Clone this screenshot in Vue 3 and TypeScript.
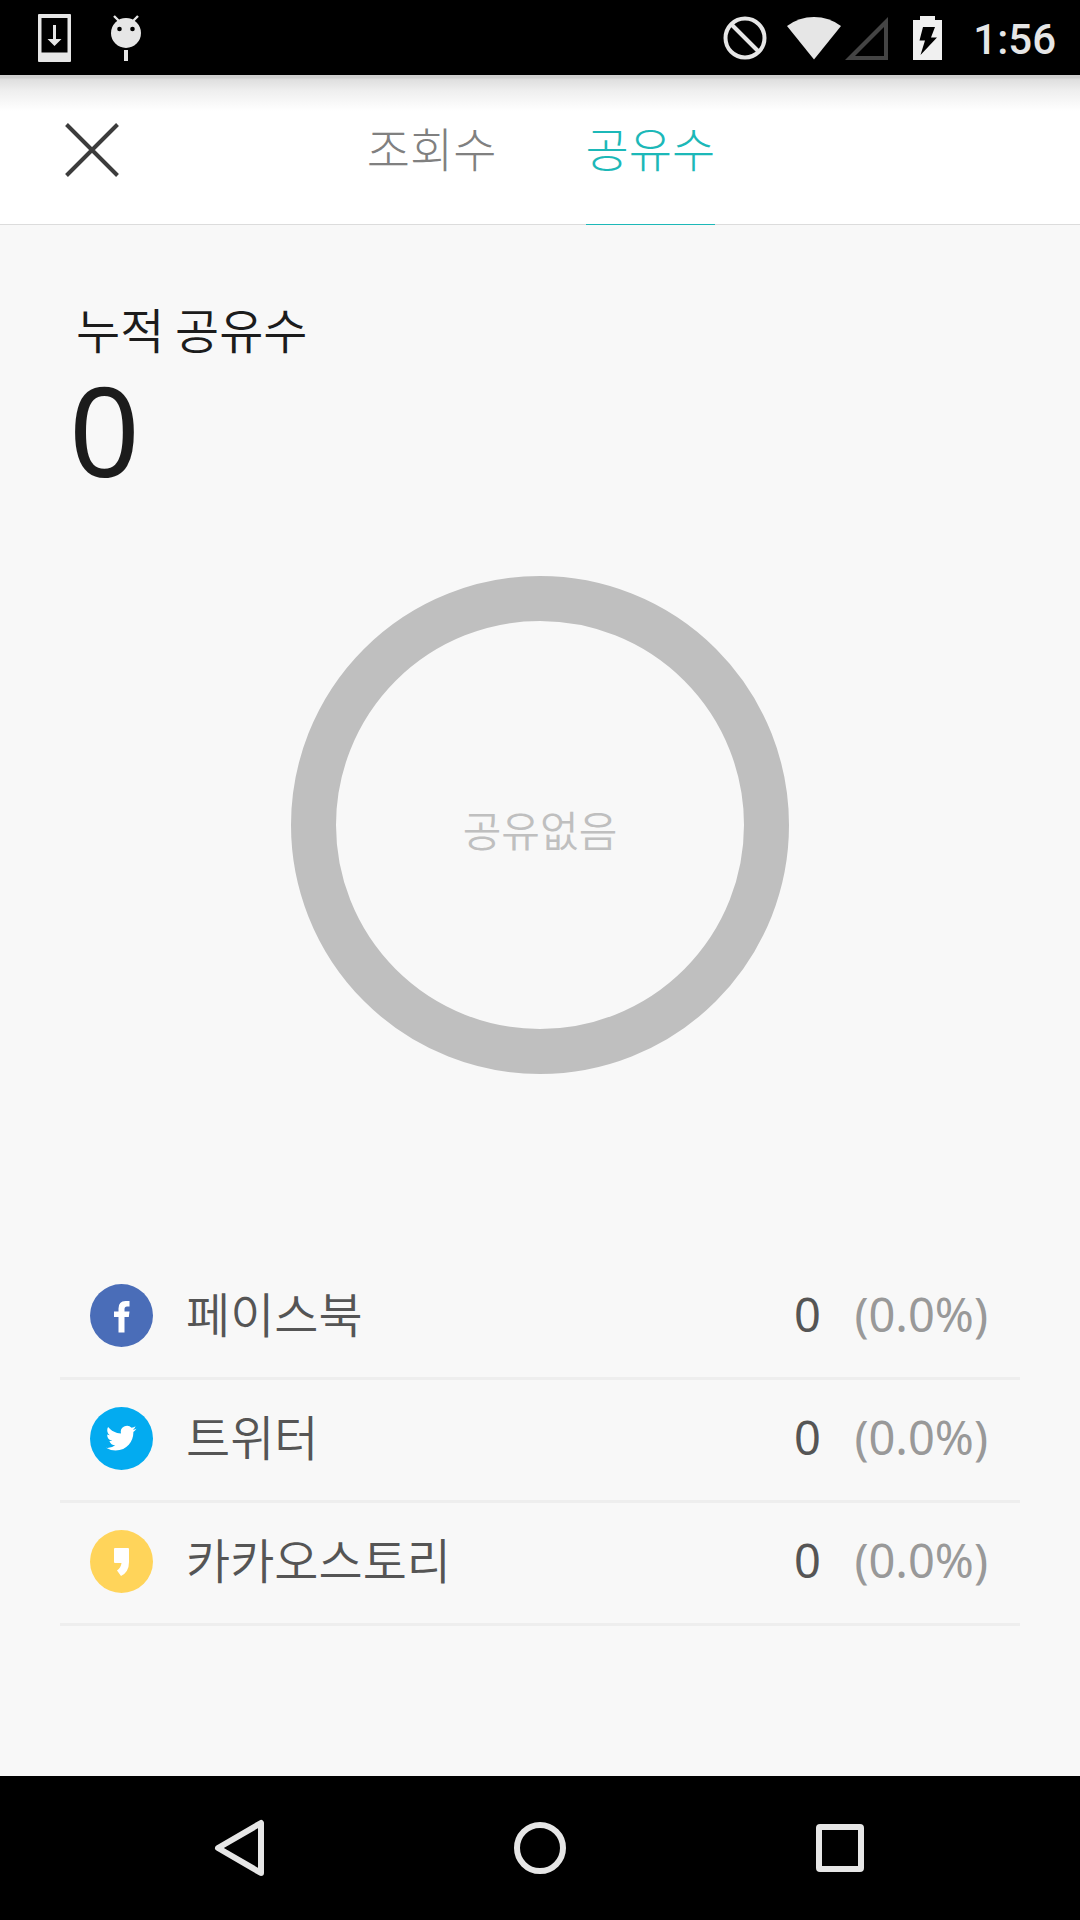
<script setup lang="ts">
import { ref } from 'vue'

interface Channel {
  id: 'facebook' | 'twitter' | 'story'
  name: string
  count: number
}

const tabs = ['조회수', '공유수']
const activeTab = ref('공유수')

const channels: Channel[] = [
  { id: 'facebook', name: '페이스북', count: 0 },
  { id: 'twitter', name: '트위터', count: 0 },
  { id: 'story', name: '카카오스토리', count: 0 },
]

const total = channels.reduce((sum, c) => sum + c.count, 0)

function share(count: number): string {
  return total === 0 ? '0.0' : ((count / total) * 100).toFixed(1)
}
</script>

<template>
  <div class="screen">
    <div class="status-bar">
      <div class="notifications">
        <svg class="icon-download" viewBox="0 0 33 48" width="33" height="48" aria-hidden="true">
          <path fill="#e6e6e6" fill-rule="evenodd" d="M1 0H32Q33 0 33 1V47Q33 48 32 48H1Q0 48 0 47V1Q0 0 1 0ZM3.500 4V38.500H29.500V4Z" />
          <path fill="#e6e6e6" d="M15 11H18V25H23.500L16.500 32L9.500 25H15Z" />
        </svg>
        <svg class="icon-bug" viewBox="0 0 30 46" width="30" height="46" aria-hidden="true">
          <path d="M3 1L8 6M27 1L22 6" stroke="#e6e6e6" stroke-width="2.400" />
          <circle cx="15" cy="18" r="15" fill="#e6e6e6" />
          <circle cx="8.500" cy="14" r="2.300" fill="#000" />
          <circle cx="21.500" cy="14" r="2.300" fill="#000" />
          <path d="M13 35H17V46H13Z" fill="#e6e6e6" />
        </svg>
      </div>
      <div class="system">
        <svg class="icon-block" viewBox="0 0 44 44" width="44" height="44" aria-hidden="true">
          <g fill="none" stroke="#e6e6e6" stroke-width="4">
            <circle cx="22" cy="22" r="19.500" />
            <path d="M8.500 8.500L35.500 35.500" />
          </g>
        </svg>
        <svg class="icon-wifi" viewBox="0 0 54 44" width="54" height="44" aria-hidden="true">
          <path fill="#e6e6e6" d="M0 10Q12 1 27 1T54 10L27 43.500Z" />
        </svg>
        <svg class="icon-signal" viewBox="0 0 43 44" width="43" height="44" aria-hidden="true">
          <path fill="#444" fill-rule="evenodd" d="M43 1V44H0ZM39 11L10 40H39Z" />
        </svg>
        <svg class="icon-battery" viewBox="0 0 29 44" width="29" height="44" aria-hidden="true">
          <path fill="#f0f0f0" d="M7 0H22V4H29V44H0V4H7Z" />
          <path fill="#000" d="M10 11H22L18 21.500H24L7.500 39L12 24.500H6.500Z" />
        </svg>
        <time class="clock">1:56</time>
      </div>
    </div>

    <header class="header">
      <button class="close" type="button" aria-label="닫기">
        <svg viewBox="0 0 54 54" width="54" height="54" aria-hidden="true">
          <path d="M1.500 1.500L52.500 52.500M52.500 1.500L1.500 52.500" stroke="#3c3c3c" stroke-width="4" />
        </svg>
      </button>
      <nav class="tabs" role="tablist">
        <button
          v-for="tab in tabs"
          :key="tab"
          type="button"
          role="tab"
          class="tab"
          :class="{ active: tab === activeTab }"
          :aria-selected="tab === activeTab"
          @click="activeTab = tab"
        >{{ tab }}</button>
      </nav>
    </header>

    <main class="content">
      <h1 class="title">누적 공유수</h1>
      <p class="total">{{ total }}</p>

      <div class="ring">공유없음</div>

      <table class="channels">
        <tbody>
          <tr v-for="channel in channels" :key="channel.id">
            <th scope="row">
              <div class="channel">
                <svg viewBox="0 0 63 63" width="63" height="63" aria-hidden="true">
                  <template v-if="channel.id === 'facebook'">
                    <circle cx="31.500" cy="31.500" r="31.500" fill="#4a6db8" />
                    <path fill="#fff" d="M28.500 48.500V33H24V27.500H28.500V24.500Q28.500 17 35.500 17H39.500V22.500H37Q34.500 22.500 34.500 25V27.500H39.500L38.800 33H34.500V48.500Z" />
                  </template>
                  <template v-else-if="channel.id === 'twitter'">
                    <circle cx="31.500" cy="31.500" r="31.500" fill="#03abf0" />
                    <path fill="#fff" transform="translate(16 16) scale(1.270)" d="M23.950 4.570a10 10 0 0 1-2.820.78 4.960 4.960 0 0 0 2.160-2.720c-.95.560-2 .96-3.130 1.180a4.920 4.920 0 0 0-8.380 4.490C7.690 8.090 4.070 6.130 1.640 3.160a4.820 4.820 0 0 0-.67 2.480c0 1.710.87 3.210 2.190 4.100a4.900 4.900 0 0 1-2.230-.62v.06a4.920 4.920 0 0 0 3.950 4.830 5 5 0 0 1-2.210.08 4.940 4.940 0 0 0 4.600 3.420A9.870 9.870 0 0 1 0 19.540a13.990 13.990 0 0 0 7.550 2.210c9.050 0 14-7.500 14-13.980 0-.21 0-.42-.02-.63a9.940 9.940 0 0 0 2.460-2.550z" />
                  </template>
                  <template v-else>
                    <circle cx="31.500" cy="31.500" r="31.500" fill="#ffd45a" />
                    <path fill="#fff" d="M25 18H38Q39 18 39 19V32Q39 42 31 46L27 40.500Q31 37.500 31.500 33H25Q24 33 24 32V19Q24 18 25 18Z" />
                  </template>
                </svg>
                <span class="name">{{ channel.name }}</span>
              </div>
            </th>
            <td class="count">{{ channel.count }}</td>
            <td class="percent">({{ share(channel.count) }}%)</td>
          </tr>
        </tbody>
      </table>
    </main>

    <nav class="nav-bar">
      <button type="button" aria-label="뒤로">
        <svg viewBox="0 0 60 60" width="60" height="60" aria-hidden="true">
          <path d="M51 5V55L8 30Z" fill="none" stroke="#e6e6e6" stroke-width="6" stroke-linejoin="round" />
        </svg>
      </button>
      <button type="button" aria-label="홈">
        <svg viewBox="0 0 60 60" width="60" height="60" aria-hidden="true">
          <circle cx="30" cy="30" r="23" fill="none" stroke="#e6e6e6" stroke-width="6" />
        </svg>
      </button>
      <button type="button" aria-label="최근 앱">
        <svg viewBox="0 0 60 60" width="60" height="60" aria-hidden="true">
          <path fill="#e6e6e6" fill-rule="evenodd" d="M10 6H50Q54 6 54 10V50Q54 54 50 54H10Q6 54 6 50V10Q6 6 10 6ZM12 12V48H48V12Z" />
        </svg>
      </button>
    </nav>
  </div>
</template>

<style>
body {
  margin: 0;
  background: #f8f8f8;
}
</style>

<style scoped>
.screen {
  display: flex;
  flex-direction: column;
  min-height: 100vh;
  font-family: 'Noto Sans CJK KR', sans-serif;
  font-weight: 350;
  color: #1c1c1c;
}

svg {
  display: block;
  flex: none;
}

button {
  padding: 0;
  border: 0;
  background: none;
  font: inherit;
  color: inherit;
}

.status-bar {
  display: flex;
  justify-content: space-between;
  height: 75px;
  padding: 0 24px 0 38px;
  background: #000;
}

.notifications,
.system {
  display: flex;
  align-items: center;
}

.notifications {
  gap: 40px;
}

.icon-block {
  margin-right: 20px;
}

.icon-wifi {
  margin-right: 4px;
}

.icon-signal {
  margin-right: 25px;
}

.icon-battery {
  margin-right: 31px;
}

.clock {
  font: 500 42px/75px Roboto, sans-serif;
  padding-top: 4px;
  color: #e6e6e6;
}

.header {
  display: grid;
  grid-template-columns: 1fr auto 1fr;
  height: 149px;
  border-bottom: 1px solid #dcdcdc;
  background: linear-gradient(#cfcfcf 3px, #dedede 4px, #efefef 16px, #fff 36px);
}

.close {
  justify-self: start;
  margin-left: 65px;
}

.tabs {
  display: flex;
  gap: 89px;
  padding-left: 2px;
}

.tab {
  height: 150px;
  padding-bottom: 6px;
  border-bottom: 1px solid transparent;
  font-size: 47px;
  font-weight: 300;
  color: #808080;
}

.tab.active {
  border-bottom-color: #1cb8b8;
  color: #1cb8b8;
}

.content {
  flex: 1;
  display: flex;
  flex-direction: column;
  padding: 67px 60px 0;
}

.title {
  margin: 0 0 0 16px;
  font-size: 48px;
  font-weight: 350;
  line-height: 72px;
}

.total {
  margin: 0 0 0 9px;
  font-family: 'Noto Sans', sans-serif;
  font-size: 124px;
  font-weight: 400;
  line-height: 130px;
}

.ring {
  display: flex;
  align-items: center;
  justify-content: center;
  align-self: center;
  box-sizing: border-box;
  width: 498px;
  height: 498px;
  margin: 82px 0 183px;
  padding-top: 6px;
  border: 45px solid #bfbfbf;
  border-radius: 50%;
  font-size: 42px;
  color: #bfbfbf;
}

.channels {
  width: 100%;
  border-spacing: 0;
  font-size: 48px;
  line-height: 72px;
  color: #555;
}

.channels th,
.channels td {
  height: 117px;
  padding: 0 0 3px;
  border-bottom: 3px solid #eee;
  font-weight: 350;
  text-align: right;
}

.channel {
  display: flex;
  align-items: center;
  gap: 33px;
  padding-left: 30px;
}

.name {
  padding-bottom: 8px;
}

.channels td {
  height: 114px;
  padding-bottom: 6px;
  font-family: 'Noto Sans', sans-serif;
  font-size: 47px;
  font-weight: 400;
}

.channels .count {
  width: 80px;
}

.channels .percent {
  width: 167px;
  padding-right: 32px;
  color: #999;
}

.nav-bar {
  display: flex;
  justify-content: center;
  height: 144px;
  background: #000;
}

.nav-bar button {
  display: grid;
  place-items: center;
  flex: 0 1 300px;
}
</style>
